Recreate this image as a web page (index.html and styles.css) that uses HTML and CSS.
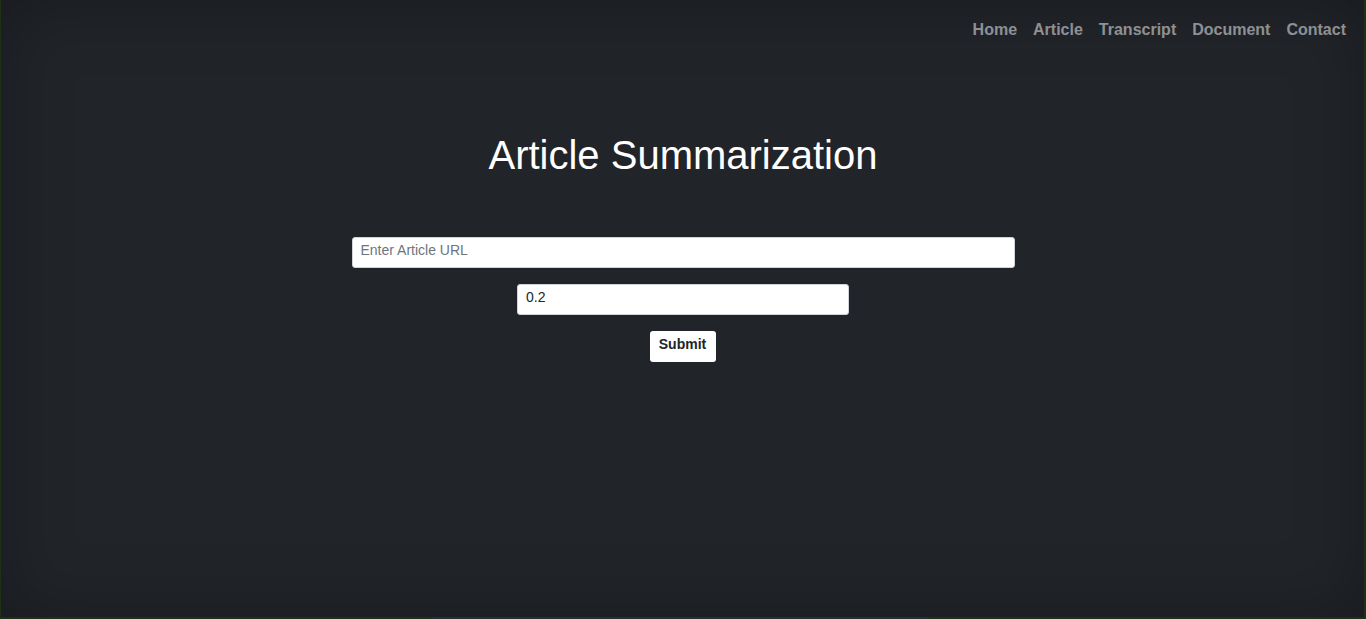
FILE: index.html
```html
<!DOCTYPE html>
<html lang="en">
<head>
<meta charset="utf-8">
<title>Article Summarization</title>
<link rel="stylesheet" href="styles.css">
</head>
<body>
<div class="page">
  <nav class="nav">
    <a href="#" class="nav-link">Home</a>
    <a href="#" class="nav-link">Article</a>
    <a href="#" class="nav-link">Transcript</a>
    <a href="#" class="nav-link">Document</a>
    <a href="#" class="nav-link">Contact</a>
  </nav>
  <main class="main">
    <h1 class="title">Article Summarization</h1>
    <form class="form">
      <input class="field field-url" type="text" placeholder="Enter Article URL">
      <input class="field field-ratio" type="text" value="0.2">
      <button class="submit" type="button">Submit</button>
    </form>
  </main>
</div>
</body>
</html>
```

FILE: styles.css
```css
html, body {
  margin: 0;
  padding: 0;
  height: 100%;
}

body {
  background: #212529;
  font-family: "Liberation Sans", Arial, sans-serif;
  overflow: hidden;
}

.page {
  position: relative;
  box-sizing: border-box;
  height: 619px;
  background: #212429;
  box-shadow:
    inset 1px 0 0 #1e3015,
    inset -2px 0 0 #1e3015,
    inset 0 -2px 0 #1e3015,
    inset 0 0 70px rgba(0, 0, 0, 0.28);
}

.page::after {
  content: "";
  position: absolute;
  left: 432px;
  width: 496px;
  bottom: 0;
  height: 2px;
  background: #2b2d34;
}

.nav {
  display: flex;
  justify-content: flex-end;
  gap: 16px;
  padding: 18px 20px 0 0;
}

.nav-link {
  color: rgba(255, 255, 255, 0.5);
  font-weight: bold;
  font-size: 16px;
  line-height: 24px;
  text-decoration: none;
}

.main {
  display: flex;
  flex-direction: column;
  align-items: center;
}

.title {
  margin: 89px 0 0;
  color: #ffffff;
  font-size: 40px;
  line-height: 48px;
  font-weight: normal;
}

.form {
  display: flex;
  flex-direction: column;
  align-items: center;
  gap: 16px;
  margin-top: 58px;
}

.field {
  box-sizing: border-box;
  height: 31px;
  padding: 3px 8px 9px;
  border: 1px solid #ced4da;
  border-radius: 3px;
  background: #ffffff;
  color: #212529;
  font-family: "Liberation Sans", Arial, sans-serif;
  font-size: 14px;
  line-height: 17px;
  outline: none;
}

.field::placeholder {
  color: #6c757d;
}

.field-url {
  width: 663px;
}

.field-ratio {
  width: 332px;
}

.submit {
  box-sizing: border-box;
  height: 31px;
  padding: 4px 10px 8px 9px;
  border: none;
  border-radius: 3px;
  background: #ffffff;
  color: #212529;
  font-family: "Liberation Sans", Arial, sans-serif;
  font-size: 14px;
  font-weight: bold;
  line-height: 17px;
}
```
